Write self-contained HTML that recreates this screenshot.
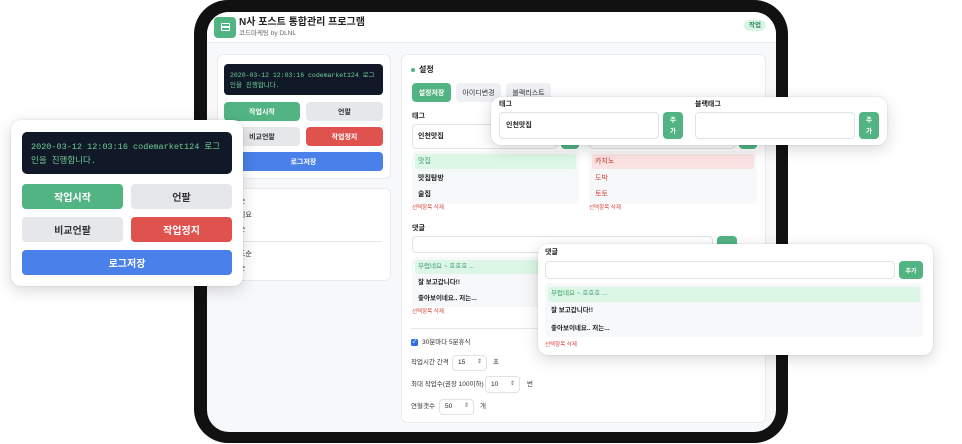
<!DOCTYPE html>
<html><head><meta charset="utf-8"><style>
*{margin:0;padding:0;box-sizing:border-box}
body{width:962px;height:444px;background:#fff;position:relative;overflow:hidden;font-family:"Liberation Sans","Noto Sans CJK KR",sans-serif;color:#222}
.a{position:absolute}
.t{position:absolute;white-space:nowrap;line-height:1}
.btn{position:absolute;border-radius:4px;display:flex;align-items:center;justify-content:center;font-weight:bold;white-space:nowrap}
.g{background:#52b482;color:#fff}.gr{background:#e5e7eb;color:#333}.r{background:#df524e;color:#fff}.b{background:#4a80ea;color:#fff}
.inp{position:absolute;background:#fff;border:1px solid #dfe2e6;border-radius:4px}
.card{position:absolute;background:#fff;border:1px solid #e8eaee;border-radius:6px}
.pop{position:absolute;background:#fff;border-radius:10px;box-shadow:0 4px 16px rgba(0,0,0,.16),0 0 2px rgba(0,0,0,.12)}
.mono{font-family:"Liberation Mono","Noto Sans CJK KR",monospace;color:#6fcf97}
.s7{font-size:7px}
</style></head><body>
<div class="a" style="left:194px;top:0;width:594px;height:443px;background:#111;border-radius:34px"></div>
<div class="a" style="left:207px;top:12px;width:569px;height:420px;background:#f7f8fa;border-radius:22px;overflow:hidden">
 <div class="a" style="left:0;top:0;width:569px;height:31px;background:#fff;border-bottom:1px solid #e8eaee"></div>
</div>
<div class="a" style="left:214px;top:17px;width:22px;height:21px;background:#52b482;border-radius:4px"></div>
<div class="a" style="left:221px;top:23px;width:9px;height:8px;border:1.5px solid #fff;border-radius:1px"></div>
<div class="a" style="left:221px;top:26px;width:9px;height:1.5px;background:#fff"></div>
<div class="t" style="left:239px;top:18px;font-size:10px;font-weight:bold;color:#222">N사 포스트 통합관리 프로그램</div>
<div class="t" style="left:239px;top:31px;font-size:6.5px;color:#666">코드마케팅 by DLNL</div>
<div class="a" style="left:744px;top:20px;width:22px;height:11px;background:#d9f5e4;border-radius:6px;font-size:6.5px;color:#2e8a57;text-align:center;line-height:11px;font-weight:bold">작업</div>

<div class="card" style="left:217px;top:54px;width:174px;height:125px"></div>
<div class="a mono s7" style="left:224px;top:64px;width:159px;height:31px;background:#111827;border-radius:4px;padding:7px 6px;line-height:10px;font-size:6.5px">2020-03-12 12:03:16 codemarket124 로그 인을 진행합니다.</div>
<div class="btn g s7" style="left:224px;top:102px;width:76px;height:19px">작업시작</div>
<div class="btn gr s7" style="left:306px;top:102px;width:77px;height:19px">언팔</div>
<div class="btn gr s7" style="left:224px;top:127px;width:76px;height:19px">비교언팔</div>
<div class="btn r s7" style="left:306px;top:127px;width:77px;height:19px">작업정지</div>
<div class="btn b s7" style="left:224px;top:152px;width:159px;height:19px">로그저장</div>
<div class="card" style="left:217px;top:188px;width:174px;height:93px"></div>
<div class="t s7" style="left:226px;top:198px;color:#333">최신순</div>
<div class="t s7" style="left:226px;top:212px;color:#333">좋아이요</div>
<div class="t s7" style="left:226px;top:226px;color:#333">댓글순</div>
<div class="a" style="left:226px;top:241px;width:156px;height:1px;background:#e5e7eb"></div>
<div class="t s7" style="left:226px;top:251px;color:#333">정확도순</div>
<div class="t s7" style="left:226px;top:265px;color:#333">최신순</div>

<div class="card" style="left:401px;top:54px;width:365px;height:369px"></div>
<div class="a" style="left:411px;top:68px;width:4px;height:4px;border-radius:50%;background:#52b482"></div>
<div class="t" style="left:419px;top:66px;font-size:8px;font-weight:bold">설정</div>
<div class="btn g s7" style="left:412px;top:83px;width:39px;height:19px">설정저장</div>
<div class="btn gr s7" style="left:456px;top:83px;width:45px;height:19px;background:#eef0f3;font-weight:normal">아이디변경</div>
<div class="btn gr s7" style="left:506px;top:83px;width:45px;height:19px;background:#eef0f3;font-weight:normal">블랙리스트</div>
<div class="t s7" style="left:412px;top:113px;font-weight:bold">태그</div>
<div class="inp" style="left:412px;top:124px;width:145px;height:25px"></div>
<div class="t s7" style="left:418px;top:133px;font-weight:bold">인천맛집</div>
<div class="btn g" style="left:561px;top:124px;width:18px;height:25px"></div>
<div class="inp" style="left:589px;top:124px;width:146px;height:25px"></div>
<div class="btn g" style="left:739px;top:124px;width:18px;height:25px"></div>
<div class="a" style="left:412px;top:151px;width:167px;height:53px;background:#f7f8fa;border-radius:4px"></div>
<div class="a" style="left:415px;top:154px;width:161px;height:15px;background:#dcf7e6;border-radius:2px"></div>
<div class="t s7" style="left:418px;top:158px;color:#3c9a66">맛집</div>
<div class="t s7" style="left:418px;top:175px;font-weight:bold">맛집탐방</div>
<div class="t s7" style="left:418px;top:191px;font-weight:bold">술집</div>
<div class="t" style="left:412px;top:206px;font-size:5.5px;color:#d9443f">선택항목 삭제</div>
<div class="a" style="left:589px;top:151px;width:168px;height:53px;background:#f7f8fa;border-radius:4px"></div>
<div class="a" style="left:592px;top:154px;width:162px;height:15px;background:#fbe2e2;border-radius:2px"></div>
<div class="t s7" style="left:595px;top:158px;color:#c0392b">카지노</div>
<div class="t s7" style="left:595px;top:175px;color:#d9443f">도박</div>
<div class="t s7" style="left:595px;top:191px;color:#d9443f">토토</div>
<div class="t" style="left:589px;top:206px;font-size:5.5px;color:#d9443f">선택항목 삭제</div>
<div class="t s7" style="left:412px;top:225px;font-weight:bold">댓글</div>
<div class="inp" style="left:412px;top:236px;width:301px;height:17px"></div>
<div class="btn g" style="left:717px;top:236px;width:20px;height:17px"></div>
<div class="a" style="left:412px;top:257px;width:345px;height:50px;background:#f7f8fa;border-radius:4px"></div>
<div class="a" style="left:415px;top:260px;width:339px;height:14px;background:#dcf7e6;border-radius:2px"></div>
<div class="t" style="left:418px;top:264px;font-size:6.5px;color:#3c9a66">부럽네요 ~ 호호호 ...</div>
<div class="t" style="left:418px;top:280px;font-size:6.5px;font-weight:bold">잘 보고갑니다!!</div>
<div class="t" style="left:418px;top:296px;font-size:6.5px;font-weight:bold">좋아보이네요.. 저는...</div>
<div class="t" style="left:412px;top:310px;font-size:5.5px;color:#d9443f">선택항목 삭제</div>
<div class="a" style="left:411px;top:328px;width:346px;height:1px;background:#e5e7eb"></div>
<div class="a" style="left:411px;top:339px;width:7px;height:7px;background:#2f6fe4;border-radius:1.5px;color:#fff;font-size:6px;line-height:7px;text-align:center">✓</div>
<div class="t" style="left:422px;top:340px;font-size:6.5px;color:#333">30분마다 5분휴식</div>
<div class="t" style="left:411px;top:360px;font-size:6.5px;color:#333">작업시간 간격</div>
<div class="inp" style="left:452px;top:355px;width:35px;height:16px"></div>
<div class="t" style="left:458px;top:360px;font-size:6.5px">15</div><div class="t" style="left:477px;top:359px;font-size:6px;color:#666">⇕</div>
<div class="t" style="left:493px;top:360px;font-size:6.5px;color:#333">초</div>
<div class="t" style="left:411px;top:382px;font-size:6.5px;color:#333">최대 작업수(권장 100이하)</div>
<div class="inp" style="left:485px;top:376px;width:35px;height:17px"></div>
<div class="t" style="left:491px;top:382px;font-size:6.5px">10</div><div class="t" style="left:510px;top:381px;font-size:6px;color:#666">⇕</div>
<div class="t" style="left:527px;top:382px;font-size:6.5px;color:#333">번</div>
<div class="t" style="left:411px;top:404px;font-size:6.5px;color:#333">연혈갯수</div>
<div class="inp" style="left:439px;top:399px;width:35px;height:16px"></div>
<div class="t" style="left:445px;top:404px;font-size:6.5px">50</div><div class="t" style="left:464px;top:403px;font-size:6px;color:#666">⇕</div>
<div class="t" style="left:480px;top:404px;font-size:6.5px;color:#333">개</div>

<div class="pop" style="left:11px;top:120px;width:232px;height:166px"></div>
<div class="a mono" style="left:22px;top:132px;width:210px;height:42px;background:#111827;border-radius:5px;padding:8px 9px;font-size:8.5px;line-height:14px">2020-03-12 12:03:16 codemarket124 로그<br>인을 진행합니다.</div>
<div class="btn g" style="left:22px;top:184px;width:101px;height:25px;font-size:10px">작업시작</div>
<div class="btn gr" style="left:131px;top:184px;width:101px;height:25px;font-size:10px">언팔</div>
<div class="btn gr" style="left:22px;top:217px;width:101px;height:25px;font-size:10px">비교언팔</div>
<div class="btn r" style="left:131px;top:217px;width:101px;height:25px;font-size:10px">작업정지</div>
<div class="btn b" style="left:22px;top:250px;width:210px;height:25px;font-size:10px">로그저장</div>

<div class="pop" style="left:491px;top:97px;width:396px;height:48px"></div>
<div class="t s7" style="left:499px;top:101px;font-weight:bold">태그</div>
<div class="inp" style="left:499px;top:112px;width:160px;height:27px"></div>
<div class="t s7" style="left:506px;top:122px;font-weight:bold">인천맛집</div>
<div class="btn g" style="left:663px;top:112px;width:20px;height:27px;font-size:6.5px;line-height:11px;text-align:center;flex-direction:column">주<br>가</div>
<div class="t s7" style="left:695px;top:101px;font-weight:bold">블랙태그</div>
<div class="inp" style="left:695px;top:112px;width:160px;height:27px"></div>
<div class="btn g" style="left:859px;top:112px;width:20px;height:27px;font-size:6.5px;line-height:11px;text-align:center;flex-direction:column">주<br>가</div>

<div class="pop" style="left:538px;top:244px;width:395px;height:111px"></div>
<div class="t s7" style="left:545px;top:249px;font-weight:bold">댓글</div>
<div class="inp" style="left:545px;top:261px;width:350px;height:18px"></div>
<div class="btn g" style="left:899px;top:261px;width:24px;height:18px;font-size:6px">추가</div>
<div class="a" style="left:545px;top:283px;width:378px;height:54px;background:#f7f8fa;border-radius:4px"></div>
<div class="a" style="left:548px;top:287px;width:372px;height:15px;background:#dcf7e6;border-radius:2px"></div>
<div class="t" style="left:551px;top:291px;font-size:6.5px;color:#3c9a66">부럽네요 ~ 호호호 ...</div>
<div class="t" style="left:551px;top:308px;font-size:6.5px;font-weight:bold">잘 보고갑니다!!</div>
<div class="t" style="left:551px;top:326px;font-size:6.5px;font-weight:bold">좋아보이네요.. 저는...</div>
<div class="t" style="left:545px;top:343px;font-size:5.5px;color:#d9443f">선택항목 삭제</div>
</body></html>
